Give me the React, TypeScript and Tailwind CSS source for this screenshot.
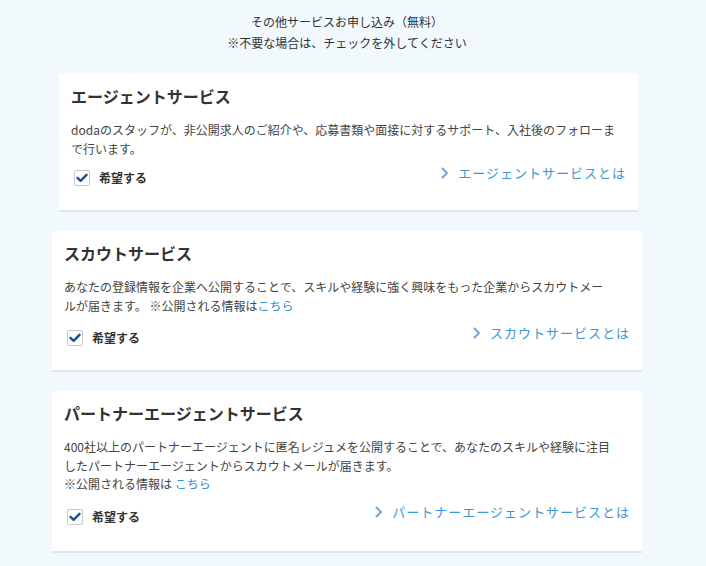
import { ReactNode } from "react";

const Check = () => (
  <span className="flex h-4 w-4 items-center justify-center rounded-[2px] border border-[#c8c8c8] bg-white">
    <svg width="12" height="10" viewBox="0 0 12 10" fill="none">
      <path d="M1.5 4.8 L4.6 7.8 L10.5 1.8" stroke="#1d4f98" strokeWidth="2.4" strokeLinecap="round" strokeLinejoin="round" />
    </svg>
  </span>
);

const Chevron = () => (
  <svg width="8" height="12" viewBox="0 0 8 12" fill="none" className="mr-[9px]">
    <path d="M1.5 1.5 L6 6 L1.5 10.5" stroke="#7aa3cf" strokeWidth="2" strokeLinecap="round" strokeLinejoin="round" />
  </svg>
);

type Service = {
  title: string;
  body: ReactNode;
  link: string;
  className: string;
  bodyClass: string;
  rowClass: string;
};

const services: Service[] = [
  {
    title: "エージェントサービス",
    body: (
      <>dodaのスタッフが、非公開求人のご紹介や、応募書類や面接に対するサポート、入社後のフォローまで行います。</>
    ),
    link: "エージェントサービスとは",
    className: "ml-[7px] mr-[4px] pb-[24px]",
    bodyClass: "pr-[8px]",
    rowClass: "mt-[12px]",
  },
  {
    title: "スカウトサービス",
    body: (
      <>
        あなたの登録情報を企業へ公開することで、スキルや経験に強く興味をもった企業からスカウトメールが届きます。
        ※公開される情報は<span className="text-[#2e8fd0]">こちら</span>
      </>
    ),
    link: "スカウトサービスとは",
    className: "pb-[24px]",
    bodyClass: "pr-[16px]",
    rowClass: "mt-[15px]",
  },
  {
    title: "パートナーエージェントサービス",
    body: (
      <>
        400社以上のパートナーエージェントに匿名レジュメを公開することで、あなたのスキルや経験に注目したパートナーエージェントからスカウトメールが届きます。
        <br />
        ※公開される情報は <span className="text-[#2e8fd0]">こちら</span>
      </>
    ),
    link: "パートナーエージェントサービスとは",
    className: "pb-[26px]",
    bodyClass: "pr-[16px]",
    rowClass: "mt-[15px]",
  },
];

const ServiceCard = ({ service }: { service: Service }) => (
  <div className={`flex flex-col bg-white px-3 pt-[11px] border-b-2 border-[#e2e5ea] ${service.className}`}>
    <h2 className="text-[16px] leading-[22px] font-bold text-[#333]">{service.title}</h2>
    <p className={`mt-[14px] text-[12px] leading-[18.5px] text-[#444] ${service.bodyClass}`}>{service.body}</p>
    <div className={`flex items-start justify-between ${service.rowClass}`}>
      <label className="flex h-4 items-center gap-[9px] pl-[3px] text-[12px] leading-4 font-bold text-[#333]">
        <Check />
        希望する
      </label>
      <a className="-mt-[5px] flex h-4 items-center text-[13px] leading-4 tracking-[1px] text-[#3a97d4]">
        <Chevron />
        {service.link}
      </a>
    </div>
  </div>
);

export default function App() {
  return (
    <div className="min-h-[566px] bg-[#f1f9fd] font-['Noto_Sans_CJK_JP','Noto_Sans',sans-serif]">
      <div className="ml-[52px] w-[590px] pt-[11px]">
        <div className="text-center text-[12px] leading-[21px] text-[#333]">
          <p>その他サービスお申し込み（無料）</p>
          <p>※不要な場合は、チェックを外してください</p>
        </div>
        <div className="mt-[21px] flex flex-col gap-[19px]">
          {services.map((s) => (
            <ServiceCard key={s.title} service={s} />
          ))}
        </div>
      </div>
    </div>
  );
}
